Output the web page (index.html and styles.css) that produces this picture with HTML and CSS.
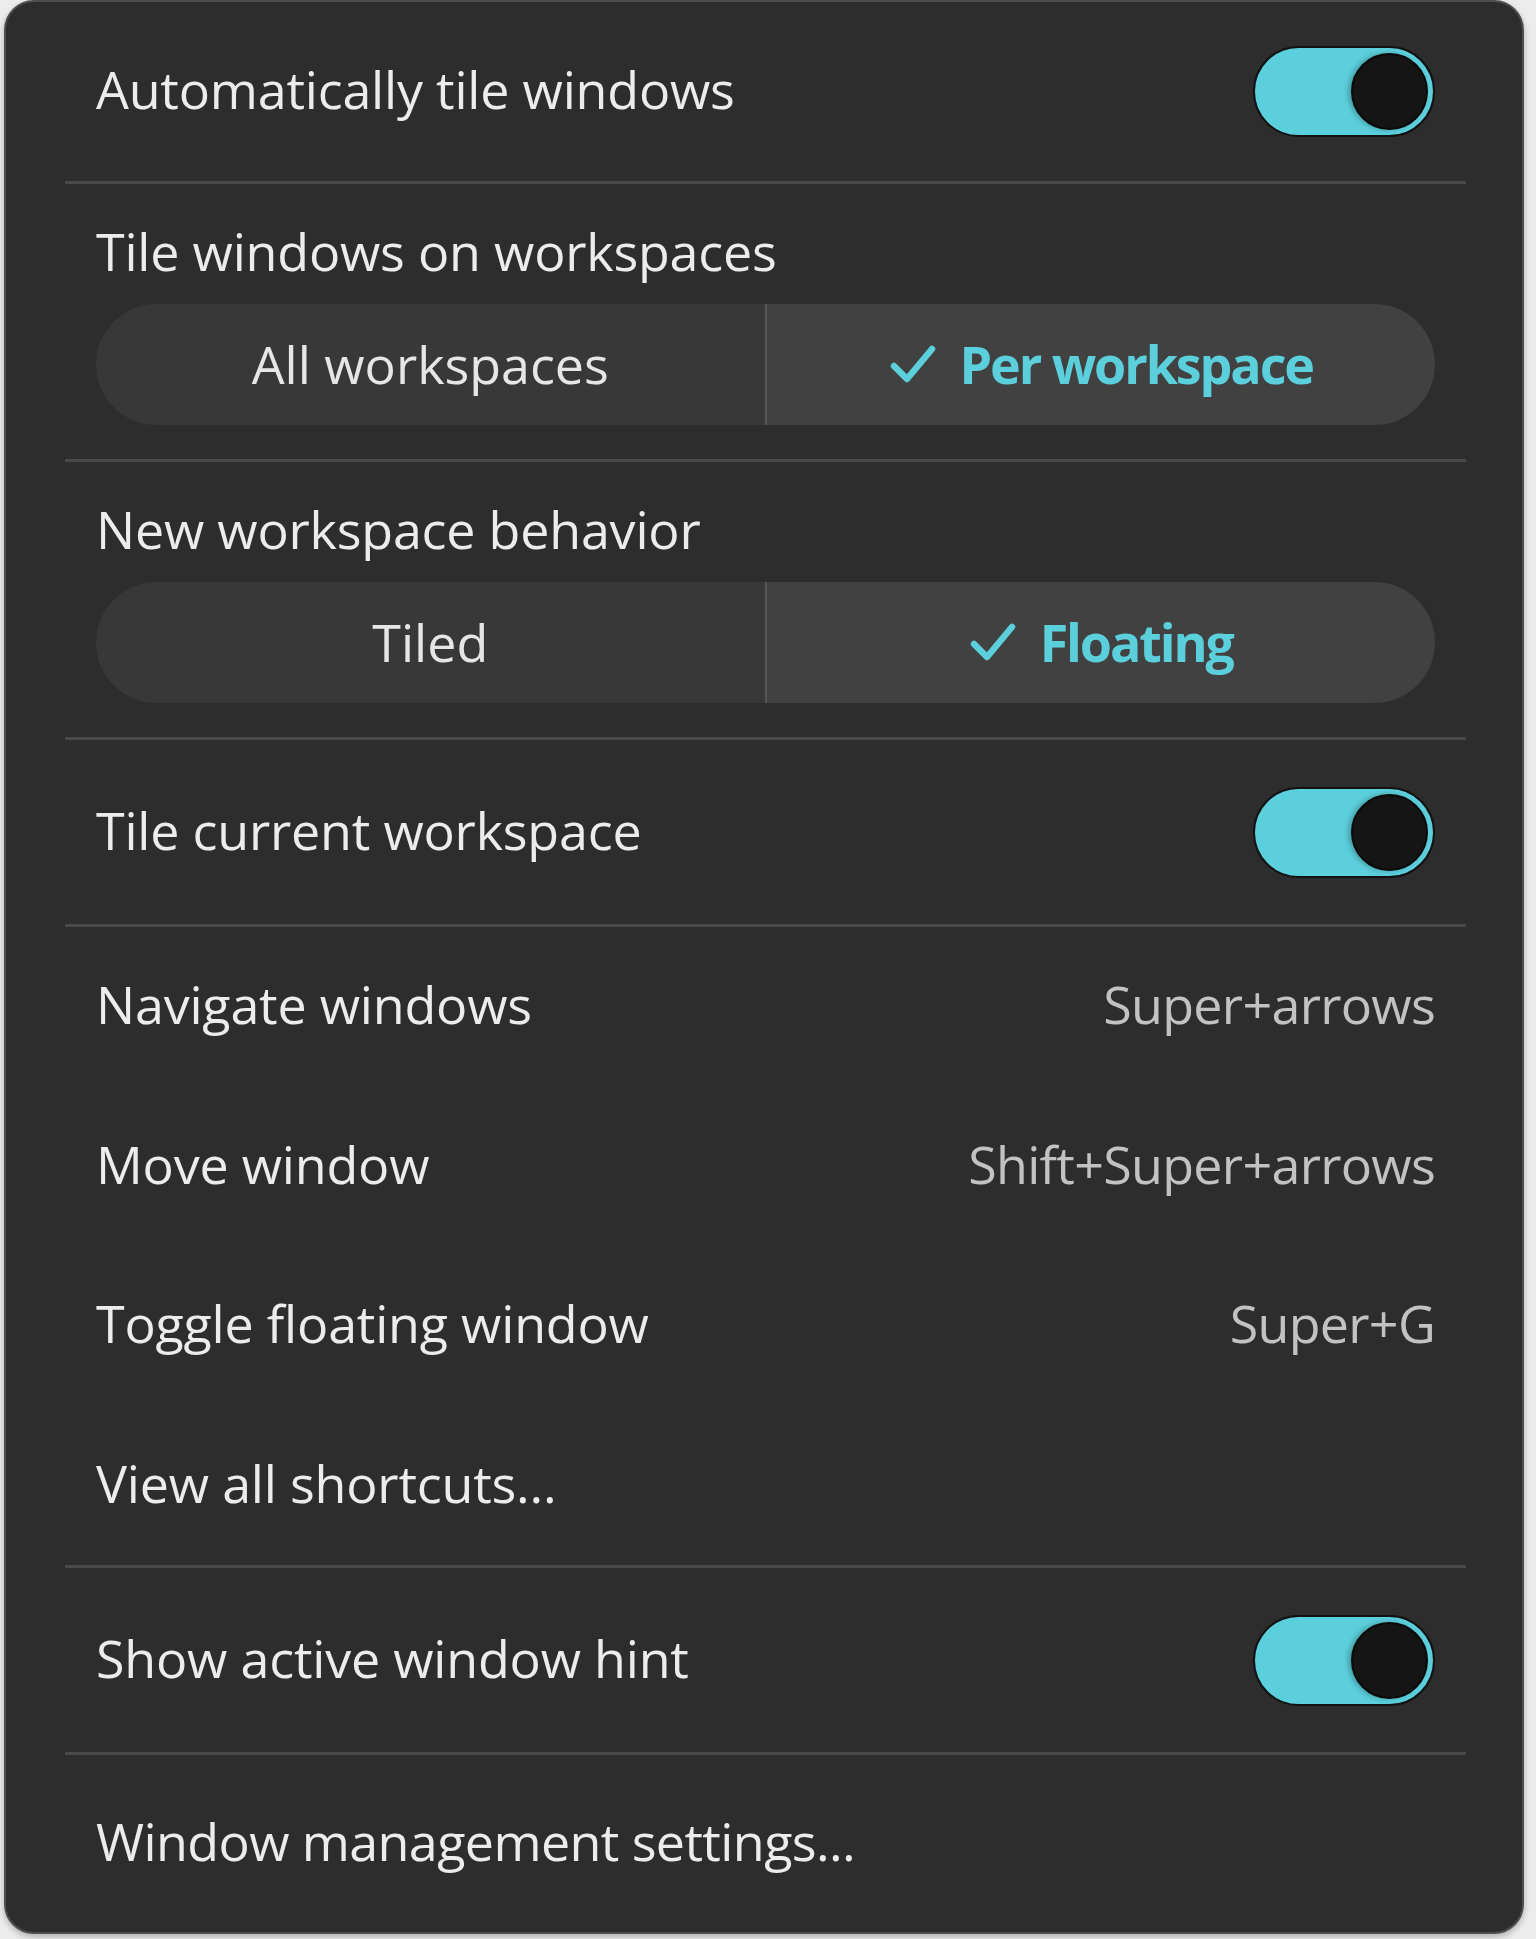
FILE: index.html
```html
<!DOCTYPE html>
<html lang="en">
<head>
<meta charset="utf-8">
<title>Window tiling</title>
<link rel="stylesheet" href="styles.css">
</head>
<body>
<div class="panel">
  <div class="row toggle-row first">
    <span class="label">Automatically tile windows</span>
    <span class="switch on"><span class="knob"></span></span>
  </div>
  <div class="divider"></div>
  <div class="seg-section">
    <div class="label seg-title">Tile windows on workspaces</div>
    <div class="segmented">
      <div class="seg">All workspaces</div>
      <div class="seg selected">
        <svg class="check" viewBox="0 0 48 42" width="48" height="42"><polyline points="5,23 18,36 43,6" fill="none" stroke="#5ccfdc" stroke-width="6.5" stroke-linecap="round" stroke-linejoin="round"/></svg>
        <span>Per workspace</span>
      </div>
    </div>
  </div>
  <div class="divider"></div>
  <div class="seg-section">
    <div class="label seg-title">New workspace behavior</div>
    <div class="segmented">
      <div class="seg">Tiled</div>
      <div class="seg selected">
        <svg class="check" viewBox="0 0 48 42" width="48" height="42"><polyline points="5,23 18,36 43,6" fill="none" stroke="#5ccfdc" stroke-width="6.5" stroke-linecap="round" stroke-linejoin="round"/></svg>
        <span>Floating</span>
      </div>
    </div>
  </div>
  <div class="divider"></div>
  <div class="row toggle-row">
    <span class="label">Tile current workspace</span>
    <span class="switch on"><span class="knob"></span></span>
  </div>
  <div class="divider"></div>
  <div class="shortcuts">
    <div class="row shortcut-row">
      <span class="label">Navigate windows</span>
      <span class="accel">Super+arrows</span>
    </div>
    <div class="row shortcut-row">
      <span class="label">Move window</span>
      <span class="accel">Shift+Super+arrows</span>
    </div>
    <div class="row shortcut-row">
      <span class="label">Toggle floating window</span>
      <span class="accel">Super+G</span>
    </div>
    <div class="row shortcut-row">
      <span class="label">View all shortcuts...</span>
    </div>
  </div>
  <div class="divider"></div>
  <div class="row toggle-row">
    <span class="label">Show active window hint</span>
    <span class="switch on"><span class="knob"></span></span>
  </div>
  <div class="divider"></div>
  <div class="row last-row">
    <span class="label tight">Window management settings...</span>
  </div>
</div>
</body>
</html>
```

FILE: styles.css
```css
* {
  box-sizing: border-box;
}

html, body {
  margin: 0;
  padding: 0;
}

body {
  background: #ececec;
  font-family: "Open Sans", "Noto Sans", sans-serif;
  color: #ececec;
  width: 1536px;
  height: 1939px;
  overflow: hidden;
}

.panel {
  margin: 0 12px 0 4px;
  width: 1520px;
  height: 1934px;
  background: #2d2d2d;
  border: 2px solid #4e4e4e;
  border-radius: 30px;
  box-shadow: 0 3px 6px rgba(0, 0, 0, 0.25);
  padding: 0 56px 0 59px;
  display: flex;
  flex-direction: column;
}

.divider {
  height: 3px;
  background: #494949;
  flex: none;
}

.row {
  display: flex;
  align-items: center;
  justify-content: space-between;
  padding: 0 31px 0 31px;
}

.label {
  font-size: 52px;
  line-height: 60px;
  padding-bottom: 5px;
  color: #ececec;
  letter-spacing: -0.2px;
  white-space: nowrap;
}

.label.tight {
  letter-spacing: -0.6px;
}

.toggle-row {
  height: 184px;
}

.toggle-row.first {
  height: 179px;
}

.switch {
  width: 182px;
  height: 91px;
  border-radius: 46px;
  background: #5ccfdc;
  border: 2px solid #121212;
  display: flex;
  align-items: center;
  justify-content: flex-end;
  padding-right: 5px;
}

.knob {
  width: 77px;
  height: 77px;
  border-radius: 50%;
  background: #151515;
  border: 2px solid #0a0a0a;
  box-shadow: -3px 0 5px rgba(0, 0, 0, 0.25);
}

.seg-section {
  height: 275px;
  padding: 37px 31px 0 31px;
}

.seg-title {
  height: 60px;
  padding-bottom: 3px;
}

.segmented {
  margin-top: 23px;
  height: 121px;
  border-radius: 61px;
  overflow: hidden;
  display: flex;
}

.seg {
  flex: 1 1 0;
  display: flex;
  align-items: center;
  justify-content: center;
  gap: 23px;
  font-size: 52px;
  color: #e6e6e6;
  background: #383838;
  letter-spacing: 0;
  padding-bottom: 3px;
}

.seg.selected {
  background: #414141;
  border-left: 2px solid #555555;
  color: #5ccfdc;
  font-weight: 700;
  letter-spacing: -2.1px;
}

.check {
  flex: none;
  margin-top: 2px;
}

.shortcuts {
  height: 638px;
  display: flex;
  flex-direction: column;
}

.shortcut-row {
  flex: 1 1 0;
}

.accel {
  font-size: 52px;
  line-height: 60px;
  padding-bottom: 5px;
  color: #c2c2c2;
  white-space: nowrap;
  letter-spacing: -0.7px;
}

.last-row {
  flex: 1 1 auto;
}
```
